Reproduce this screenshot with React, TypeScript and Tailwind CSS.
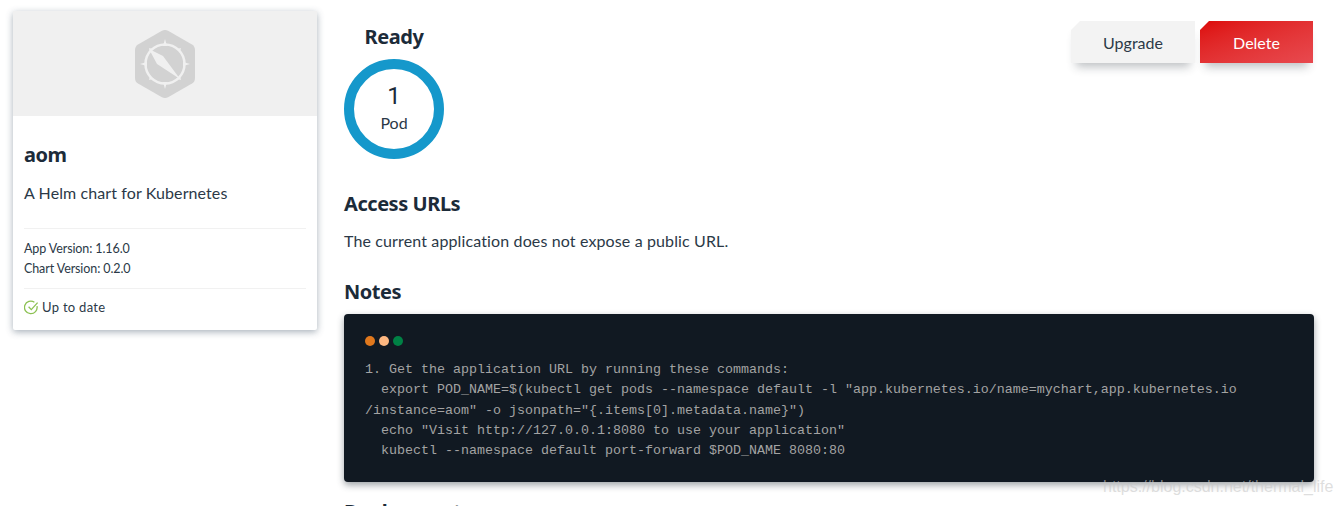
const notes = `1. Get the application URL by running these commands:
  export POD_NAME=$(kubectl get pods --namespace default -l "app.kubernetes.io/name=mychart,app.kubernetes.io
/instance=aom" -o jsonpath="{.items[0].metadata.name}")
  echo "Visit http://127.0.0.1:8080 to use your application"
  kubectl --namespace default port-forward $POD_NAME 8080:80`;

const headingFont = "font-['Noto_Sans',sans-serif] font-bold text-[#1c2b39] tracking-[-0.45px]";

function ChartIcon() {
  return (
    <svg width="62" height="70" viewBox="0 0 62 70">
      <path
        d="M27.5 2 Q31 0 34.5 2 L58 15.5 Q61 17.5 61 21 L61 49 Q61 52.5 58 54.5 L34.5 68 Q31 70 27.5 68 L4 54.5 Q1 52.5 1 49 L1 21 Q1 17.5 4 15.5 Z"
        fill="#d2d2d2"
      />
      <circle cx="31" cy="35" r="19.5" fill="none" stroke="#f0f0f0" strokeWidth="2.5" />
      <path d="M31 10 L33 17 L29 17 Z M31 60 L33 53 L29 53 Z M6 35 L13 33 L13 37 Z M56 35 L49 33 L49 37 Z" fill="#f0f0f0" />
      <path d="M47 19 L46 23 L43 20 Z M47 51 L43 50 L46 47 Z M15 51 L16 47 L19 50 Z M15 19 L19 20 L16 23 Z" fill="#f0f0f0" />
      <path d="M15 20 L29 27 L23 35 Z M29 27 L46 50 L23 35 Z" fill="#f0f0f0" />
    </svg>
  );
}

function CheckIcon() {
  return (
    <svg width="15" height="15" viewBox="0 0 15 15" fill="none" stroke="#8cc152" strokeWidth="1.3">
      <path d="M13 6.2 A6.3 6.3 0 1 1 10.4 2.2" />
      <path d="M4.6 6.8 L7.3 9.6 L13.6 2.6" />
    </svg>
  );
}

export default function App() {
  return (
    <div className="relative h-[506px] w-[1340px] overflow-hidden bg-white font-['Noto_Sans',sans-serif] text-[#1c2b39]">
      <div className="flex items-start pl-[13px] pt-[11px]">
        {/* chart card */}
        <div className="w-[304px] rounded-[2px] bg-white shadow-[0_2px_7px_rgba(60,80,100,0.45)]">
          <div className="flex h-[105px] items-center justify-center bg-[#f0f0f0]">
            <ChartIcon />
          </div>
          <div className="px-[11px]">
            <h3 className={`${headingFont} mt-[25px] text-[20px] leading-[28px]`}>aom</h3>
            <p className="mt-[12px] font-['Lato',sans-serif] text-[16px] leading-[24px] tracking-[0.1px] text-[#2b3947]">A Helm chart for Kubernetes</p>
            <div className="mt-[23px] border-t border-[#f1f1f1] pb-[9px] pt-[10px] font-['Lato',sans-serif] text-[12.5px] leading-[20px] tracking-[-0.1px] text-[#2b3947]">
              <div>App Version: 1.16.0</div>
              <div>Chart Version: 0.2.0</div>
            </div>
            <div className="flex h-[42px] items-center gap-[3px] border-t border-[#f1f1f1] pb-[4px] font-['Lato',sans-serif] text-[13px] tracking-[0.3px] text-[#2b3947]">
              <CheckIcon />
              <span>Up to date</span>
            </div>
          </div>
        </div>

        {/* details */}
        <div className="ml-[27px] w-[970px]">
          <div className="flex items-start justify-between">
            <div className="w-[100px]">
              <h4 className={`${headingFont} mt-[11px] text-center text-[20px] leading-[30px]`}>Ready</h4>
              <div className="mt-[7px] flex h-[100px] w-[100px] flex-col items-center justify-center rounded-full border-[10px] border-[#1598cb]">
                <span className="font-['Roboto',sans-serif] text-[24px] leading-[30px]">1</span>
                <span className="mb-[2px] font-['Lato',sans-serif] text-[16px] leading-[24px] text-[#2b3947]">Pod</span>
              </div>
            </div>
            <div className="mr-px mt-[10px] flex gap-[5px] font-['Lato',sans-serif] text-[16px] text-[#2b3947]">
              <div className="shadow-[0_9px_10px_-5px_rgba(40,50,60,0.3)]">
                <div className="flex h-[42px] w-[124px] items-center justify-center bg-[#f3f3f3] pt-[2px] [clip-path:polygon(9px_0,100%_0,100%_100%,0_100%,0_9px)]">
                  Upgrade
                </div>
              </div>
              <div className="shadow-[0_9px_10px_-5px_rgba(40,50,60,0.3)]">
                <div className="flex h-[42px] w-[113px] items-center justify-center bg-gradient-to-br from-[#dd0606] to-[#e8494f] pt-[2px] text-white [clip-path:polygon(9px_0,100%_0,100%_100%,0_100%,0_9px)]">
                  Delete
                </div>
              </div>
            </div>
          </div>

          <h2 className={`${headingFont} mt-[29px] text-[20px] leading-[32px]`}>Access URLs</h2>
          <p className="mt-[9px] font-['Lato',sans-serif] text-[16px] leading-[24px] tracking-[0.13px] text-[#2b3947]">The current application does not expose a public URL.</p>

          <h2 className={`${headingFont} mt-[23px] text-[20px] leading-[32px]`}>Notes</h2>
          <div className="mt-[6px] h-[168px] rounded-[4px] bg-[#111922] px-[21px] pt-[22px] shadow-[0_3px_7px_rgba(40,50,60,0.45)]">
            <div className="flex gap-[4px]">
              <span className="h-[10px] w-[10px] rounded-full bg-[#e0781d]" />
              <span className="h-[10px] w-[10px] rounded-full bg-[#fdb781]" />
              <span className="h-[10px] w-[10px] rounded-full bg-[#008145]" />
            </div>
            <pre className="mt-[14px] whitespace-pre-wrap font-['Liberation_Mono',monospace] text-[13.33px] leading-[20.25px] text-[#a3a3a3]">{notes}</pre>
          </div>

          <h2 className={`${headingFont} mt-[14px] text-[20px] leading-[32px]`}>Deployment</h2>
        </div>
      </div>

      <span className="absolute left-[1103px] top-[477px] font-['Liberation_Sans',sans-serif] text-[16px] leading-[20px] text-[#c8c8c8]/60">
        https://blog.csdn.net/thermal_life
      </span>
    </div>
  );
}
